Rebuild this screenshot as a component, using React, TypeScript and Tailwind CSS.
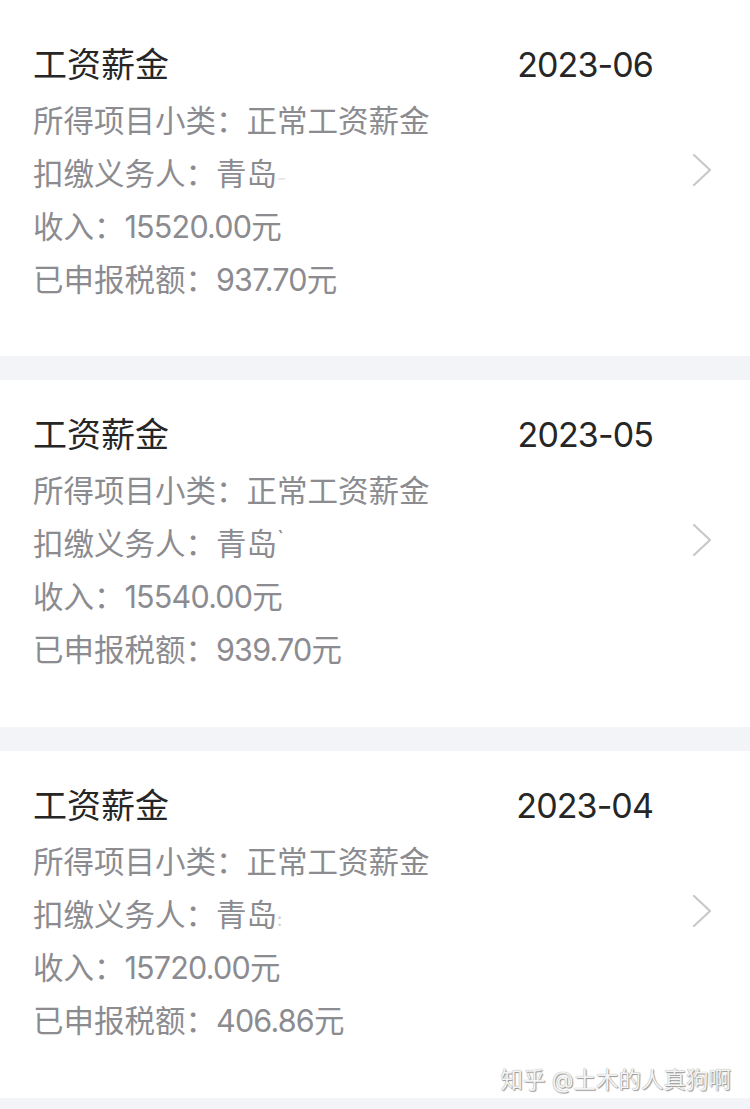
import React from "react";

type Record = {
  month: string;
  payer: React.ReactNode;
  income: string;
  tax: string;
};

const records: Record[] = [
  {
    month: "2023-06",
    payer: (
      <>
        青岛<span className="text-[#e4e4e6] text-[20px] leading-none">-</span>
      </>
    ),
    income: "15520.00",
    tax: "937.70",
  },
  {
    month: "2023-05",
    payer: (
      <>
        青岛<span className="text-[#8a8a8f] text-[22px] leading-none relative -top-[8px]">`</span>
      </>
    ),
    income: "15540.00",
    tax: "939.70",
  },
  {
    month: "2023-04",
    payer: (
      <>
        青岛<span className="text-[#c9c9cc] text-[18px] leading-none">:</span>
      </>
    ),
    income: "15720.00",
    tax: "406.86",
  },
];

function Chevron() {
  return (
    <svg width="22" height="34" viewBox="0 0 22 34" fill="none" className="shrink-0">
      <path d="M3 2 L19 17 L3 32" stroke="#c8c8cc" strokeWidth="2.2" strokeLinecap="round" strokeLinejoin="round" />
    </svg>
  );
}

function RecordCard({ r, first }: { r: Record; first?: boolean }) {
  return (
    <div className={`bg-white flex items-center pl-[33px] pr-[37px] ${first ? "pt-[34px] pb-[50px]" : "pt-[24px] pb-[51px]"}`}>
      <div className="flex-1 pr-[38px]">
        <div className="flex justify-between items-center h-[60px] text-[34px] text-[#262626]">
          <span>工资薪金</span>
          <span className="tracking-[-0.9px]">{r.month}</span>
        </div>
        <div className="text-[30.5px] text-[#8b8b90] leading-[53px]">
          <div className="h-[53px]">所得项目小类：正常工资薪金</div>
          <div className="h-[53px]">扣缴义务人：{r.payer}</div>
          <div className="h-[53px]">
            收入：<span className="tracking-[-0.8px]">{r.income}</span>元
          </div>
          <div className="h-[53px]">
            已申报税额：<span className="tracking-[-0.8px]">{r.tax}</span>元
          </div>
        </div>
      </div>
      <Chevron />
    </div>
  );
}

export default function App() {
  return (
    <div
      className="relative w-[750px] h-[1109px] bg-[#f3f4f8] overflow-hidden flex flex-col gap-[24px]"
      style={{ fontFamily: 'Inter, "Noto Sans CJK SC", sans-serif' }}
    >
      {records.map((r, i) => (
        <RecordCard key={r.month} r={r} first={i === 0} />
      ))}
      <div className="absolute right-[19px] top-[1063px] text-[22.5px] text-[#f4f4f4] [text-shadow:0_0_1px_#8a8a8a,1px_1px_1px_#9a9a9a]">
        知乎 @土木的人真狗啊
      </div>
    </div>
  );
}
